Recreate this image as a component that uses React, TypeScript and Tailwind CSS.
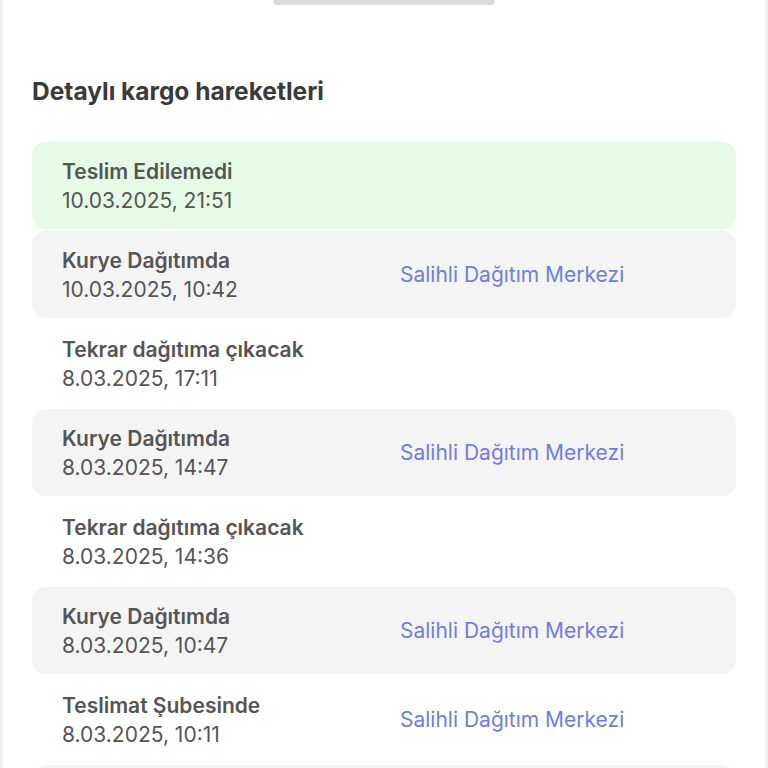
import React from 'react';

interface Movement {
  status: string;
  date: string;
  location?: string;
}

const movements: Movement[] = [
  { status: 'Teslim Edilemedi', date: '10.03.2025, 21:51' },
  { status: 'Kurye Dağıtımda', date: '10.03.2025, 10:42', location: 'Salihli Dağıtım Merkezi' },
  { status: 'Tekrar dağıtıma çıkacak', date: '8.03.2025, 17:11' },
  { status: 'Kurye Dağıtımda', date: '8.03.2025, 14:47', location: 'Salihli Dağıtım Merkezi' },
  { status: 'Tekrar dağıtıma çıkacak', date: '8.03.2025, 14:36' },
  { status: 'Kurye Dağıtımda', date: '8.03.2025, 10:47', location: 'Salihli Dağıtım Merkezi' },
  { status: 'Teslimat Şubesinde', date: '8.03.2025, 10:11', location: 'Salihli Dağıtım Merkezi' },
  { status: 'Transfer Merkezinde', date: '7.03.2025, 22:03', location: 'Manisa Transfer Merkezi' },
];

function MovementRow({ item, index }: { item: Movement; index: number }) {
  // first row is the latest event, then rows alternate gray / white
  const bg = index === 0 ? 'bg-[#e5fbe5]' : index % 2 === 1 ? 'bg-[#f4f4f4]' : 'bg-white';
  return (
    <div className={`${bg} h-[87px] shrink-0 rounded-[14px] px-[30px] flex items-center`}>
      <div className="w-[338px] shrink-0 flex flex-col">
        <span className="text-[21px] leading-[29px] font-semibold text-[#555555]">{item.status}</span>
        <span className="text-[21px] leading-[29px] text-[#555555]">{item.date}</span>
      </div>
      {item.location && (
        <span className="text-[21px] leading-[29px] text-[#6e7ee0]">{item.location}</span>
      )}
    </div>
  );
}

export default function App() {
  return (
    <div className="h-[768px] overflow-hidden bg-white border-x-[3px] border-[#f2f2f2] font-['Inter',sans-serif]">
      <div className="mx-auto w-[222px] h-[5px] rounded-b-[4px] bg-[#dcdcdc]" />
      <h2 className="mt-[71px] ml-[29px] text-[24.5px] leading-[30px] font-bold text-[#3a3a3a]">
        Detaylı kargo hareketleri
      </h2>
      <div className="mt-[36px] mx-[29px] flex flex-col gap-[2px]">
        {movements.map((m, i) => (
          <MovementRow key={i} item={m} index={i} />
        ))}
      </div>
    </div>
  );
}
